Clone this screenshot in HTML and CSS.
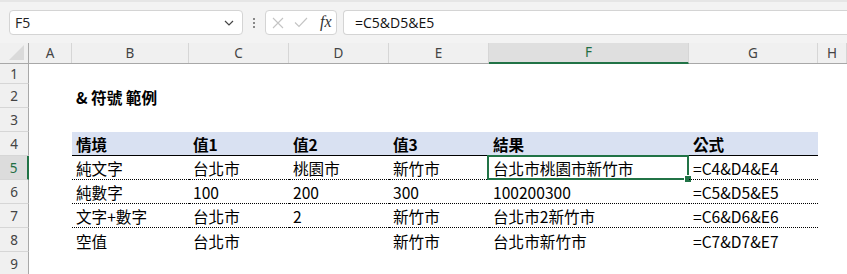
FILE: index.html
```html
<!DOCTYPE html>
<html lang="zh-Hant">
<head>
<meta charset="utf-8">
<link rel="stylesheet" href="styles.css">
</head>
<body>
<div class="app">
  <div class="toolbar">
    <div class="namebox">
      <span class="nb-text">F5</span>
      <svg class="chev" width="10" height="6" viewBox="0 0 10 6"><path d="M1 1 L5 5 L9 1" fill="none" stroke="#444" stroke-width="1.2"/></svg>
    </div>
    <div class="vdots"><i></i><i></i><i></i></div>
    <div class="fxbox">
      <svg width="12" height="12" viewBox="0 0 12 12"><path d="M1 1 L11 11 M11 1 L1 11" stroke="#c4c4c4" stroke-width="1.1" fill="none"/></svg>
      <svg width="14" height="11" viewBox="0 0 14 11"><path d="M1 5.5 L5 9.5 L13 1" stroke="#c4c4c4" stroke-width="1.1" fill="none"/></svg>
      <span class="fx">fx</span>
    </div>
    <div class="formula">=C5&amp;D5&amp;E5</div>
  </div>

  <div class="sheet">
    <div class="row colhdr">
      <div class="corner"><svg width="15" height="15" viewBox="0 0 15 15"><path d="M15 0 L15 15 L0 15 Z" fill="#dadada"/></svg></div>
      <div class="ch">A</div><div class="ch">B</div><div class="ch">C</div><div class="ch">D</div><div class="ch">E</div><div class="ch sel">F</div><div class="ch">G</div><div class="ch">H</div><div class="ch last"></div>
    </div>

    <div class="row r1"><div class="rh">1</div></div>
    <div class="row"><div class="rh">2</div><div></div><div class="c title">&amp; 符號 範例</div></div>
    <div class="row"><div class="rh">3</div></div>
    <div class="row">
      <div class="rh">4</div><div></div>
      <div class="c hd">情境</div><div class="c hd">值1</div><div class="c hd">值2</div><div class="c hd">值3</div><div class="c hd">結果</div><div class="c hd">公式</div>
    </div>
    <div class="row">
      <div class="rh rsel">5</div><div></div>
      <div class="c dt">純文字</div><div class="c dt">台北市</div><div class="c dt">桃園市</div><div class="c dt">新竹市</div><div class="c dt active">台北市桃園市新竹市<span class="selbox"><span class="handle"></span></span></div><div class="c dt">=C4&amp;D4&amp;E4</div>
    </div>
    <div class="row">
      <div class="rh">6</div><div></div>
      <div class="c dt">純數字</div><div class="c dt">100</div><div class="c dt">200</div><div class="c dt">300</div><div class="c dt">100200300</div><div class="c dt">=C5&amp;D5&amp;E5</div>
    </div>
    <div class="row">
      <div class="rh">7</div><div></div>
      <div class="c dt">文字+數字</div><div class="c dt">台北市</div><div class="c dt">2</div><div class="c dt">新竹市</div><div class="c dt">台北市2新竹市</div><div class="c dt">=C6&amp;D6&amp;E6</div>
    </div>
    <div class="row">
      <div class="rh">8</div><div></div>
      <div class="c">空值</div><div class="c">台北市</div><div class="c"></div><div class="c">新竹市</div><div class="c">台北市新竹市</div><div class="c">=C7&amp;D7&amp;E7</div>
    </div>
    <div class="row"><div class="rh">9</div></div>
  </div>
</div>
</body>
</html>
```
FILE: styles.css
```css
* { box-sizing: border-box; }
html, body { margin: 0; padding: 0; }
body {
  width: 847px;
  height: 274px;
  overflow: hidden;
  background: #fff;
  font-family: "Noto Sans CJK TC", "Noto Sans", sans-serif;
}
.app { width: 847px; }

.toolbar {
  height: 43px;
  background: #f3f3f3;
  border-top: 2px solid #e6e6e6;
  display: flex;
  align-items: flex-start;
  padding-top: 8px;
  padding-left: 9px;
}
.namebox {
  width: 234px;
  height: 25px;
  background: #fff;
  border: 1px solid #d4d4d4;
  border-radius: 4px;
  display: flex;
  align-items: center;
  justify-content: space-between;
  padding: 0 8px 0 5px;
  font-family: "Open Sans", "Noto Sans", sans-serif;
  font-size: 14px;
  color: #222;
}
.vdots {
  width: 22px;
  height: 25px;
  display: flex;
  flex-direction: column;
  align-items: center;
  justify-content: center;
  gap: 2px;
}
.vdots i { display: block; width: 2px; height: 2px; background: #888; }
.fxbox {
  width: 72px;
  height: 25px;
  background: #fff;
  border: 1px solid #d4d4d4;
  border-radius: 4px;
  display: flex;
  align-items: center;
  gap: 10px;
  padding-left: 6px;
}
.fx {
  font-family: "Liberation Serif", "DejaVu Serif", serif;
  font-style: italic;
  font-size: 16px;
  color: #333;
  margin-left: 2px;
  margin-top: -2px;
}
.formula {
  flex: 1;
  height: 25px;
  margin-left: 6px;
  background: #fff;
  border: 1px solid #d4d4d4;
  border-right: none;
  border-radius: 4px 0 0 4px;
  display: flex;
  align-items: center;
  padding-left: 11px;
  font-family: "Open Sans", "Noto Sans", sans-serif;
  font-size: 14px;
  color: #111;
}

.row {
  display: grid;
  grid-template-columns: 29px 43px 117px 100px 100px 100px 200px 129px 1fr;
  height: 24px;
}
.row.r1 { height: 20px; }
.colhdr {
  height: 21px;
  background: #f0f0f0;
  border-bottom: 1px solid #a8a8a8;
}
.corner {
  border-right: 1px solid #a8a8a8;
  display: flex;
  align-items: flex-end;
  justify-content: flex-end;
  padding: 0 4px 3px 0;
}
.ch {
  border-right: 1px solid #d6d6d6;
  display: flex;
  align-items: center;
  justify-content: center;
  font-family: "Noto Sans", "Open Sans", sans-serif;
  font-size: 13.5px;
  color: #444;
}
.ch.last { border-right: none; }
.ch.sel {
  background: #dfdfdf;
  color: #1f6e43;
  border-bottom: 2px solid #217346;
  margin-bottom: -1px;
}

.rh {
  background: #f0f0f0;
  border-right: 1px solid #a8a8a8;
  border-bottom: 1px solid #d6d6d6;
  display: flex;
  align-items: center;
  justify-content: center;
  font-family: "Noto Sans", "Open Sans", sans-serif;
  font-size: 13.5px;
  color: #444;
}
.rh.rsel {
  background: #dcdcdc;
  color: #1f6e43;
  border-right: 2px solid #217346;
}

.c {
  display: flex;
  align-items: center;
  padding: 1px 0 0 4px;
  font-size: 15.6px;
  color: #000;
  white-space: nowrap;
  position: relative;
}
.title { font-weight: bold; grid-column: 3 / span 3; }
.hd {
  background: #d9e1f2;
  border-bottom: 1px solid #000;
  font-weight: bold;
}
.dt { border-bottom: 1px dotted #000; }
.active { overflow: visible; }
.selbox {
  position: absolute;
  left: -2px;
  top: -1px;
  right: 0;
  bottom: -1px;
  border: 2px solid #217346;
  pointer-events: none;
}
.handle {
  position: absolute;
  right: -4px;
  bottom: -4px;
  width: 6px;
  height: 6px;
  background: #217346;
  outline: 1px solid #fff;
}
```
